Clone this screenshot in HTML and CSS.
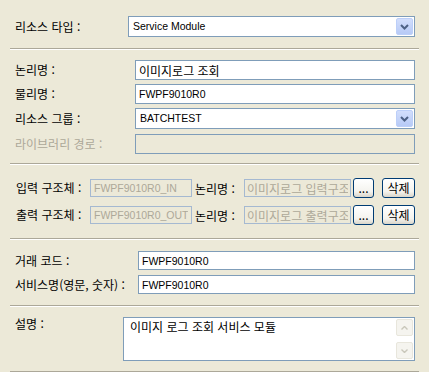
FILE: index.html
```html
<!DOCTYPE html>
<html lang="ko">
<head>
  <meta charset="UTF-8" />
  <title>리소스 정보</title>
  <link rel="stylesheet" href="styles.css">
</head>
<body>
  <div class="panel">
    <div class="sec sec-type">
      <div class="row h21">
        <span class="lbl">리소스 타입 :</span>
        <div class="combo">
          <span class="combo-text">Service Module</span>
          <span class="combo-btn">
            <svg width="9" height="6" viewBox="0 0 9 6"><polyline points="1,1 4.5,4.5 8,1" fill="none" stroke="#4D6185" stroke-width="2"/></svg>
          </span>
        </div>
      </div>
    </div>
    <div class="sep"></div>

    <div class="sec sec-name">
      <div class="row">
        <span class="lbl">논리명 :</span>
        <input class="field ko" value="이미지로그 조회">
      </div>
      <div class="row">
        <span class="lbl">물리명 :</span>
        <input class="field" value="FWPF9010R0">
      </div>
      <div class="row h21">
        <span class="lbl">리소스 그룹 :</span>
        <div class="combo">
          <span class="combo-text">BATCHTEST</span>
          <span class="combo-btn">
            <svg width="9" height="6" viewBox="0 0 9 6"><polyline points="1,1 4.5,4.5 8,1" fill="none" stroke="#4D6185" stroke-width="2"/></svg>
          </span>
        </div>
      </div>
      <div class="row row-lib">
        <span class="lbl off">라이브러리 경로 :</span>
        <input class="field" disabled>
      </div>
    </div>
    <div class="sep"></div>

    <div class="sec sec-io">
      <div class="row">
        <span class="lbl">입력 구조체 :</span>
        <input class="field struct" value="FWPF9010R0_IN" disabled>
        <span class="lbl2">논리명 :</span>
        <input class="field struct desc" value="이미지로그 입력구조체" disabled>
        <button class="btn btn-more">...</button>
        <button class="btn btn-del">삭제</button>
      </div>
      <div class="row">
        <span class="lbl">출력 구조체 :</span>
        <input class="field struct" value="FWPF9010R0_OUT" disabled>
        <span class="lbl2">논리명 :</span>
        <input class="field struct desc" value="이미지로그 출력구조체" disabled>
        <button class="btn btn-more">...</button>
        <button class="btn btn-del">삭제</button>
      </div>
    </div>
    <div class="sep"></div>

    <div class="sec sec-svc">
      <div class="row">
        <span class="lbl">거래 코드 :</span>
        <input class="field" value="FWPF9010R0">
      </div>
      <div class="row">
        <span class="lbl">서비스명(영문, 숫자) :</span>
        <input class="field" value="FWPF9010R0">
      </div>
    </div>
    <div class="sep"></div>

    <div class="sec sec-desc">
      <div class="row">
        <span class="lbl">설명 :</span>
        <div class="memo">
          <div class="memo-text">이미지 로그 조회 서비스 모듈</div>
          <div class="vscroll">
            <span class="arrow">
              <svg width="7" height="4" viewBox="0 0 7 4"><polyline points="0.5,3.5 3.5,0.5 6.5,3.5" fill="none" stroke="#C9C7BA" stroke-width="1.4"/></svg>
            </span>
            <span class="arrow">
              <svg width="7" height="4" viewBox="0 0 7 4"><polyline points="0.5,0.5 3.5,3.5 6.5,0.5" fill="none" stroke="#C9C7BA" stroke-width="1.4"/></svg>
            </span>
          </div>
        </div>
      </div>
    </div>
    <div class="sep"></div>
  </div>
</body>
</html>
```

FILE: styles.css
```css
html, body {
  margin: 0;
  padding: 0;
  background: #ECE9D8;
  font-family: "Noto Sans CJK KR", sans-serif;
  font-size: 12px;
  color: #000;
}

.panel {
  padding-top: 16px;
}

.sep {
  height: 1px;
  margin: 0 10px;
  background: #ACA899;
  border-bottom: 1px solid #fff;
}

.row {
  display: flex;
  align-items: center;
  height: 20px;
  padding: 0 14px 0 15px;
}

.row.h21 {
  height: 21px;
}

.lbl {
  flex: none;
  white-space: nowrap;
  line-height: 20px;
}

.lbl.off {
  color: #ACA899;
}

.field {
  flex: 1;
  min-width: 0;
  height: 20px;
  margin: 0;
  padding: 0 3px;
  box-sizing: border-box;
  border: 1px solid #7F9DB9;
  background: #fff;
  font-family: "Liberation Sans", sans-serif;
  font-size: 10.5px;
  color: #000;
  outline: none;
}

.field.ko {
  font-family: "Noto Sans CJK KR", sans-serif;
  font-size: 12px;
}

.field:disabled {
  background: #ECE9D8;
  color: #ACA899;
}

/* combo box */
.combo {
  flex: 1;
  display: flex;
  height: 21px;
  box-sizing: border-box;
  border: 1px solid #7F9DB9;
  background: #fff;
}

.combo-text {
  flex: 1;
  padding-left: 4px;
  font-family: "Liberation Sans", sans-serif;
  font-size: 10.5px;
  line-height: 19px;
}

.combo-btn {
  width: 17px;
  display: flex;
  align-items: center;
  justify-content: center;
  margin: 1px;
  border: 1px solid #BCCFF9;
  border-radius: 2px;
  background: linear-gradient(#D2DEFC, #B7CAF6);
  box-sizing: border-box;
}

/* section 1 */
.sec-type {
  padding-bottom: 11px;
}

.sec-type .lbl {
  width: 113px;
}

/* section 2 */
.sec-name {
  padding: 10px 0 9px;
}

.sec-name .lbl {
  width: 120px;
}

.sec-name .row + .row {
  margin-top: 4px;
}

.sec-name .row-lib {
  margin-top: 5px !important;
}

/* section 3 */
.sec-io {
  padding: 13px 0 13px;
}

.sec-io .row {
  padding-left: 16px;
}

.sec-io .row + .row {
  margin-top: 7px;
}

.sec-io .lbl {
  width: 74px;
}

.field.struct {
  flex: none;
  width: 102px;
  height: 18px;
  border-color: #A5B9D1;
}

.field.desc {
  width: 107px;
  padding: 0 2px;
  font-family: "Noto Sans CJK KR", sans-serif;
  font-size: 12px;
}

.lbl2 {
  flex: none;
  width: 49px;
  margin-left: 3px;
  white-space: nowrap;
}

.btn {
  flex: none;
  height: 20px;
  margin: 0;
  padding: 0;
  border: 1px solid #003C74;
  border-radius: 3px;
  background: linear-gradient(#FFFFFF, #F4F3EE 70%, #D9D5CA);
  font-family: "Noto Sans CJK KR", sans-serif;
  font-size: 12px;
  line-height: 16px;
  color: #000;
}

.btn-more {
  width: 21px;
  margin-left: 2px;
}

.btn-del {
  width: 33px;
  margin-left: 8px;
}

/* section 4 */
.sec-svc {
  padding: 11px 0 11px;
}

.sec-svc .lbl {
  width: 123px;
}

.sec-svc .row,
.sec-svc .field {
  height: 19px;
}

.sec-svc .row + .row {
  margin-top: 5px;
}

/* section 5 */
.sec-desc {
  padding: 10px 0 10px;
}

.sec-desc .row {
  height: 44px;
  align-items: flex-start;
}

.sec-desc .lbl {
  width: 108px;
  line-height: 14px;
}

.memo {
  flex: 1;
  display: flex;
  height: 44px;
  box-sizing: border-box;
  border: 1px solid #7F9DB9;
  background: #fff;
}

.memo-text {
  flex: 1;
  padding: 1px 6px;
  line-height: 16px;
}

.vscroll {
  width: 17px;
  display: flex;
  flex-direction: column;
  justify-content: space-between;
  padding: 1px 1px 1px 0;
}

.arrow {
  height: 17px;
  display: flex;
  align-items: center;
  justify-content: center;
  box-sizing: border-box;
  border: 1px solid #E8E6DC;
  border-radius: 2px;
  background: #F5F4EF;
}
```
